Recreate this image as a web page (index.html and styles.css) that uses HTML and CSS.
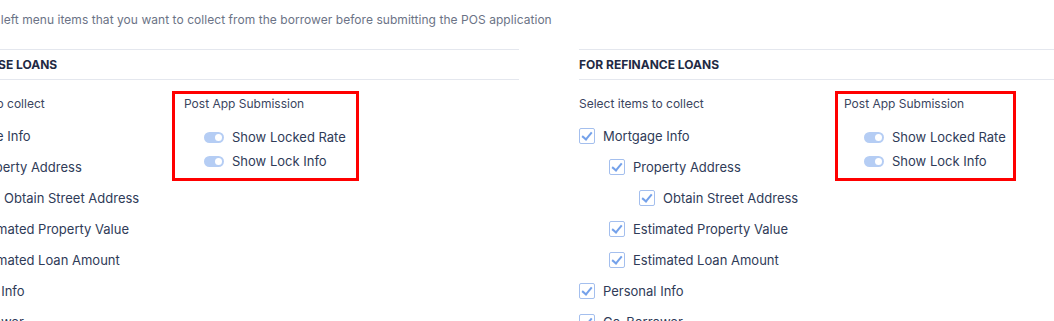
FILE: index.html
```html
<!DOCTYPE html>
<html lang="en">
<head>
  <meta charset="UTF-8">
  <meta name="viewport" content="width=device-width, initial-scale=1.0">
  <title>POS Menu Settings</title>
  <link rel="stylesheet" href="styles.css">
</head>
<body>
  <div class="page">
    <p class="subtitle">Select the left menu items that you want to collect from the borrower before submitting the POS application</p>

    <div class="panels">
      <!-- Purchase loans -->
      <section class="panel panel-purchase">
        <h2 class="panel-title">FOR PURCHASE LOANS</h2>
        <div class="panel-body">
          <div class="collect">
            <p class="label">Select items to collect</p>
            <ul class="items">
              <li class="item"><span class="box"></span>Mortgage Info</li>
              <li class="item lvl1"><span class="box"></span>Property Address</li>
              <li class="item lvl2"><span class="box"></span>Obtain Street Address</li>
              <li class="item lvl1"><span class="box"></span>Estimated Property Value</li>
              <li class="item lvl1"><span class="box"></span>Estimated Loan Amount</li>
              <li class="item"><span class="box"></span>Personal Info</li>
              <li class="item"><span class="box"></span>Co-Borrower</li>
            </ul>
          </div>
          <div class="post-box">
            <p class="label">Post App Submission</p>
            <ul class="toggles">
              <li class="toggle-row"><span class="toggle"></span>Show Locked Rate</li>
              <li class="toggle-row"><span class="toggle"></span>Show Lock Info</li>
            </ul>
          </div>
        </div>
      </section>

      <!-- Refinance loans -->
      <section class="panel">
        <h2 class="panel-title">FOR REFINANCE LOANS</h2>
        <div class="panel-body">
          <div class="collect">
            <p class="label">Select items to collect</p>
            <ul class="items">
              <li class="item"><span class="box"></span>Mortgage Info</li>
              <li class="item lvl1"><span class="box"></span>Property Address</li>
              <li class="item lvl2"><span class="box"></span>Obtain Street Address</li>
              <li class="item lvl1"><span class="box"></span>Estimated Property Value</li>
              <li class="item lvl1"><span class="box"></span>Estimated Loan Amount</li>
              <li class="item"><span class="box"></span>Personal Info</li>
              <li class="item"><span class="box"></span>Co-Borrower</li>
            </ul>
          </div>
          <div class="post-box">
            <p class="label">Post App Submission</p>
            <ul class="toggles">
              <li class="toggle-row"><span class="toggle"></span>Show Locked Rate</li>
              <li class="toggle-row"><span class="toggle"></span>Show Lock Info</li>
            </ul>
          </div>
        </div>
      </section>
    </div>
  </div>
</body>
</html>
```

FILE: styles.css
```css
html, body {
  overflow: hidden;
}

body {
  margin: 0;
  font-family: Inter, "Noto Sans", sans-serif;
  color: #2f3b58;
  background: #ffffff;
}

/* the view is scrolled a bit to the right */
.page {
  margin-left: -80px;
  padding-top: 10px;
}

.subtitle {
  margin: 0 0 19px;
  padding-left: 20px;
  font-size: 12px;
  letter-spacing: 0.05px;
  line-height: 20px;
  color: #6b7386;
  white-space: nowrap;
}

.panels {
  display: flex;
  gap: 60px;
}

.panel {
  flex: 0 0 599px;
}

.panel-title {
  margin: 0;
  border-top: 1px solid #e4e7ee;
  border-bottom: 1px solid #e4e7ee;
  font-size: 12px;
  font-weight: 700;
  line-height: 29px;
  color: #1f2a44;
}

.panel-body {
  display: grid;
  grid-template-columns: 256px auto;
  align-items: start;
}

.collect {
  padding-top: 16px;
}

.label {
  margin: 0;
  font-size: 12px;
  line-height: 16px;
  color: #3a4560;
}

ul {
  list-style: none;
  margin: 0;
  padding: 0;
}

.items {
  margin-top: 8px;
}

.item {
  display: flex;
  align-items: center;
  gap: 8px;
  height: 31px;
  font-size: 13px;
  white-space: nowrap;
}

.lvl1 { padding-left: 30px; }
.lvl2 { padding-left: 60px; }

.box {
  width: 14px;
  height: 14px;
  border: 1px solid #a4bfee;
  border-radius: 2px;
  flex-shrink: 0;
  position: relative;
}

.box::after {
  content: "";
  position: absolute;
  left: 4px;
  top: 1px;
  width: 4px;
  height: 8px;
  border-right: 2px solid #74a1ea;
  border-bottom: 2px solid #74a1ea;
  transform: rotate(40deg);
}

.post-box {
  margin-top: 11px;
  border: 3px solid #ff0000;
  padding: 2px 8px 5px 6px;
  width: 161px;
}

.panel-purchase .panel-body {
  grid-template-columns: 252px auto;
}

.panel-purchase .post-box {
  padding-left: 9px;
  width: 164px;
}

.toggles {
  margin-top: 13px;
  padding-left: 20px;
}

.toggle-row {
  display: flex;
  align-items: center;
  gap: 8px;
  height: 24px;
  font-size: 13px;
  white-space: nowrap;
}

.toggle {
  width: 20px;
  height: 11px;
  border-radius: 6px;
  background: #b5cdf4;
  position: relative;
  flex-shrink: 0;
}

.toggle::after {
  content: "";
  position: absolute;
  right: 2px;
  top: 2px;
  width: 7px;
  height: 7px;
  border-radius: 50%;
  background: #ffffff;
}
```
